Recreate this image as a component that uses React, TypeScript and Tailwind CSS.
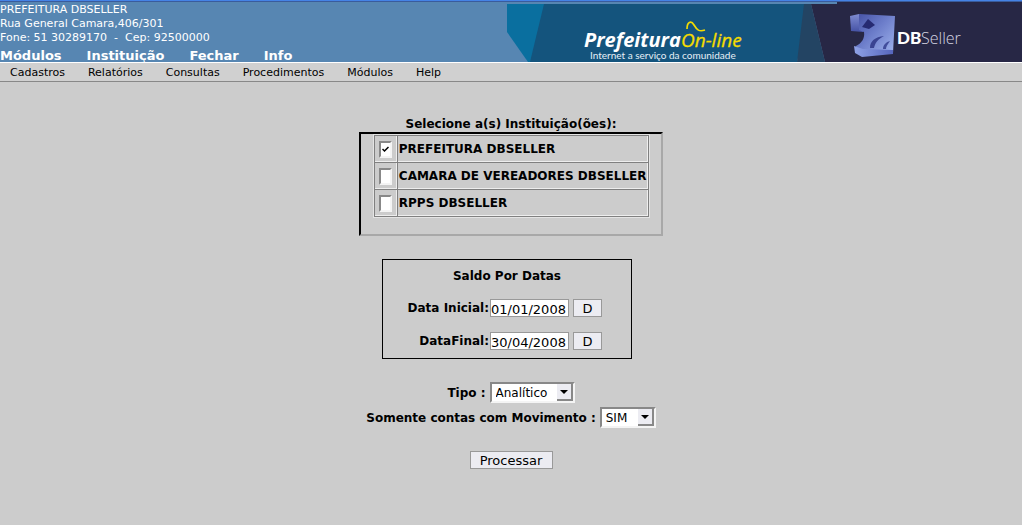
import React, { useState } from "react";

const topMenu = ["Módulos", "Instituição", "Fechar", "Info"];
const subMenu = ["Cadastros", "Relatórios", "Consultas", "Procedimentos", "Módulos", "Help"];
const institutions = ["PREFEITURA DBSELLER", "CAMARA DE VEREADORES DBSELLER", "RPPS DBSELLER"];

function Banner() {
  return (
    <svg viewBox="0 0 515 60" className="block h-[60px] w-[515px] shrink-0" role="img" aria-label="Prefeitura On-line, DBSeller">
      <defs>
        <linearGradient id="front" x1="0" y1="0" x2="1" y2="1">
          <stop offset="0" stopColor="#4450a4" />
          <stop offset="0.45" stopColor="#6c7dca" />
          <stop offset="1" stopColor="#a4b8f0" />
        </linearGradient>
        <linearGradient id="side" x1="0" y1="0" x2="0" y2="1">
          <stop offset="0" stopColor="#7f8cd2" />
          <stop offset="1" stopColor="#4451a4" />
        </linearGradient>
        <linearGradient id="base" x1="0" y1="0" x2="1" y2="0">
          <stop offset="0" stopColor="#8fa2e6" />
          <stop offset="1" stopColor="#5666bd" />
        </linearGradient>
      </defs>
      <path d="M0 2H37V60H21L0 30Z" fill="#0a6f9f" />
      <path d="M37 2H304L290 60H23Z" fill="#14547d" />
      <path d="M297 2H304L318 60H290Z" fill="#234463" />
      <path d="M304 2H330V0H515V60H318Z" fill="#272745" />
      <text x="77" y="45" fill="#fff" fontFamily="'Open Sans', sans-serif" fontSize="20" fontWeight="700" fontStyle="italic">Prefeitura</text>
      <text x="174" y="45" fill="#f5dc00" stroke="#f5dc00" strokeWidth="0.3" fontFamily="'Open Sans', sans-serif" fontSize="19" fontStyle="italic">On-line</text>
      <path d="M180 27C180 20 184 18 187 23C190 28 192 30 198 28" fill="none" stroke="#f5dc00" strokeWidth="1.7" />
      <text x="83" y="57" fill="#e6f0f7" fontFamily="Lato, sans-serif" fontSize="10">Internet a serviço da comunidade</text>
      <path d="M343 14L352 12L356 14V30L344 29Z" fill="url(#side)" />
      <path d="M352 12L388 14L386 51L356 54C350 50 347 46 349 44C355 41 358 36 357 30L352 28Z" fill="url(#front)" />
      <path d="M347 44L356 47L386 48L386 52L355 55L348 51Z" fill="url(#base)" />
      <path d="M361 17L368 23L362 27L355 25Z" fill="#262a72" />
      <path d="M363 46C363 39 368 35 377 34C371 37 368 41 367 46Z" fill="#3a4492" />
      <path d="M376 47C376 43 379 40 383 39C380 43 379 45 379 47Z" fill="#424e9c" />
      <text x="390" y="42" fill="#fff" fontFamily="Lato, sans-serif" fontSize="17" fontWeight="900">DB</text>
      <text x="414" y="42" fill="#d5d5e2" fontFamily="'Open Sans', sans-serif" fontSize="16" fontWeight="300">Seller</text>
    </svg>
  );
}

function DateRow({ id, label, value }: { id: string; label: string; value: string }) {
  return (
    <div className="flex h-[18px] items-center">
      <label htmlFor={id} className="w-[106px] shrink-0 text-right font-bold">{label}</label>
      <input id={id} defaultValue={value} className="ml-px h-[18px] w-[79px] border border-[#999] bg-white pt-0.5 text-[13px]" />
      <button type="button" className="ml-1 h-[18px] w-[29px] border border-[#999] bg-[#ececf2] pt-px text-[13px] leading-[15px]">D</button>
    </div>
  );
}

function Select({ id, options, className }: { id: string; options: string[]; className: string }) {
  return (
    <div className={`relative ml-1 h-[21px] border-2 border-t-[#888] border-l-[#888] border-r-[#f4f4f4] border-b-[#f4f4f4] bg-white ${className}`}>
      <select id={id} className="block h-full w-full appearance-none bg-white pl-1 outline-none">
        {options.map((o) => <option key={o}>{o}</option>)}
      </select>
      <span className="pointer-events-none absolute top-0 right-0 flex h-[17px] w-4 items-center justify-center border-r-2 border-b-2 border-[#888] bg-[#ececf2]">
        <svg viewBox="0 0 8 4" className="h-1 w-2"><path d="M0 0H8L4 4Z" fill="#000" /></svg>
      </span>
    </div>
  );
}

export default function App() {
  const [checked, setChecked] = useState([true, false, false]);
  return (
    <div className="min-h-screen bg-[#ccc] font-['DejaVu_Sans',sans-serif] text-[12px] leading-4 text-black">
      <header className="border-t border-[#4583e6] bg-[#5786b2]">
        <div className="flex h-[61px] justify-between overflow-hidden border-t border-[#3a5c9c]">
          <div className="text-white">
            <address className="pt-px text-[11px] leading-[14px] whitespace-pre not-italic">
              <div>PREFEITURA DBSELLER</div>
              <div>Rua General Camara,406/301</div>
              <div>Fone: 51 30289170  -  Cep: 92500000</div>
            </address>
            <nav className="mt-[3px] flex gap-[25px] text-[13px] font-bold">
              {topMenu.map((m) => <a key={m} href="#">{m}</a>)}
            </nav>
          </div>
          <Banner />
        </div>
      </header>
      <nav className="flex h-5 gap-[23px] border-t border-b border-t-white border-b-[#888] bg-[#d0d0d0] pl-2.5 text-[11px] leading-5">
        {subMenu.map((m) => <a key={m} href="#">{m}</a>)}
      </nav>
      <main>
        <form className="flex flex-col items-center pt-[35px]">
          <h2 className="leading-[15px] font-bold">Selecione a(s) Instituição(ões):</h2>
          <div className="flex h-[104px] w-[304px] justify-center border-2 border-t-black border-l-black border-r-[#a8a8a8] border-b-[#a8a8a8] pt-px">
            <table className="h-[82px] w-[275px] border-collapse self-start border border-[#808080] shadow-[0_0_0_1px_#e4e4e4]">
              <tbody>
                {institutions.map((name, i) => (
                  <tr key={name} className="h-[27px]">
                    <td className="w-6 border border-[#808080] p-0 shadow-[inset_-1px_-1px_#eee]">
                      <span className="relative mx-auto block h-[17px] w-[13px]">
                        <input
                          id={`inst-${i}`}
                          type="checkbox"
                          checked={checked[i]}
                          onChange={() => setChecked(checked.map((c, j) => (j === i ? !c : c)))}
                          className="block h-[17px] w-[13px] appearance-none border-2 border-t-[#888] border-l-[#888] border-r-[#f4f4f4] border-b-[#f4f4f4] bg-white"
                        />
                        {checked[i] && (
                          <svg viewBox="0 0 7 7" className="pointer-events-none absolute top-[5px] left-[3px] h-[7px] w-[7px]">
                            <path d="M0.5 3L2.5 5L6.5 1" fill="none" stroke="#000" strokeWidth="1.5" />
                          </svg>
                        )}
                      </span>
                    </td>
                    <td className="border border-[#808080] px-px py-0 font-bold whitespace-nowrap shadow-[inset_-1px_-1px_#eee]">
                      <label htmlFor={`inst-${i}`}>{name}</label>
                    </td>
                  </tr>
                ))}
              </tbody>
            </table>
          </div>
          <fieldset className="mt-[23px] mr-2 h-[100px] w-[250px] border border-black pt-2">
            <h3 className="text-center font-bold">Saldo Por Datas</h3>
            <div className="mt-[15px] flex flex-col gap-[15px]">
              <DateRow id="data-inicial" label="Data Inicial:" value="01/01/2008" />
              <DateRow id="data-final" label="DataFinal:" value="30/04/2008" />
            </div>
          </fieldset>
          <div className="mt-[23px] flex items-center">
            <label htmlFor="tipo" className="font-bold">Tipo :</label>
            <Select id="tipo" options={["Analítico", "Sintético"]} className="w-[85px]" />
          </div>
          <div className="mt-1 flex items-center">
            <label htmlFor="movimento" className="font-bold">Somente contas com Movimento :</label>
            <Select id="movimento" options={["SIM", "NÃO"]} className="w-14" />
          </div>
          <button type="button" className="mt-[23px] h-[18px] w-[83px] border border-[#999] bg-[#ececf2] pt-px text-[13px] leading-[15px]">Processar</button>
        </form>
      </main>
    </div>
  );
}
